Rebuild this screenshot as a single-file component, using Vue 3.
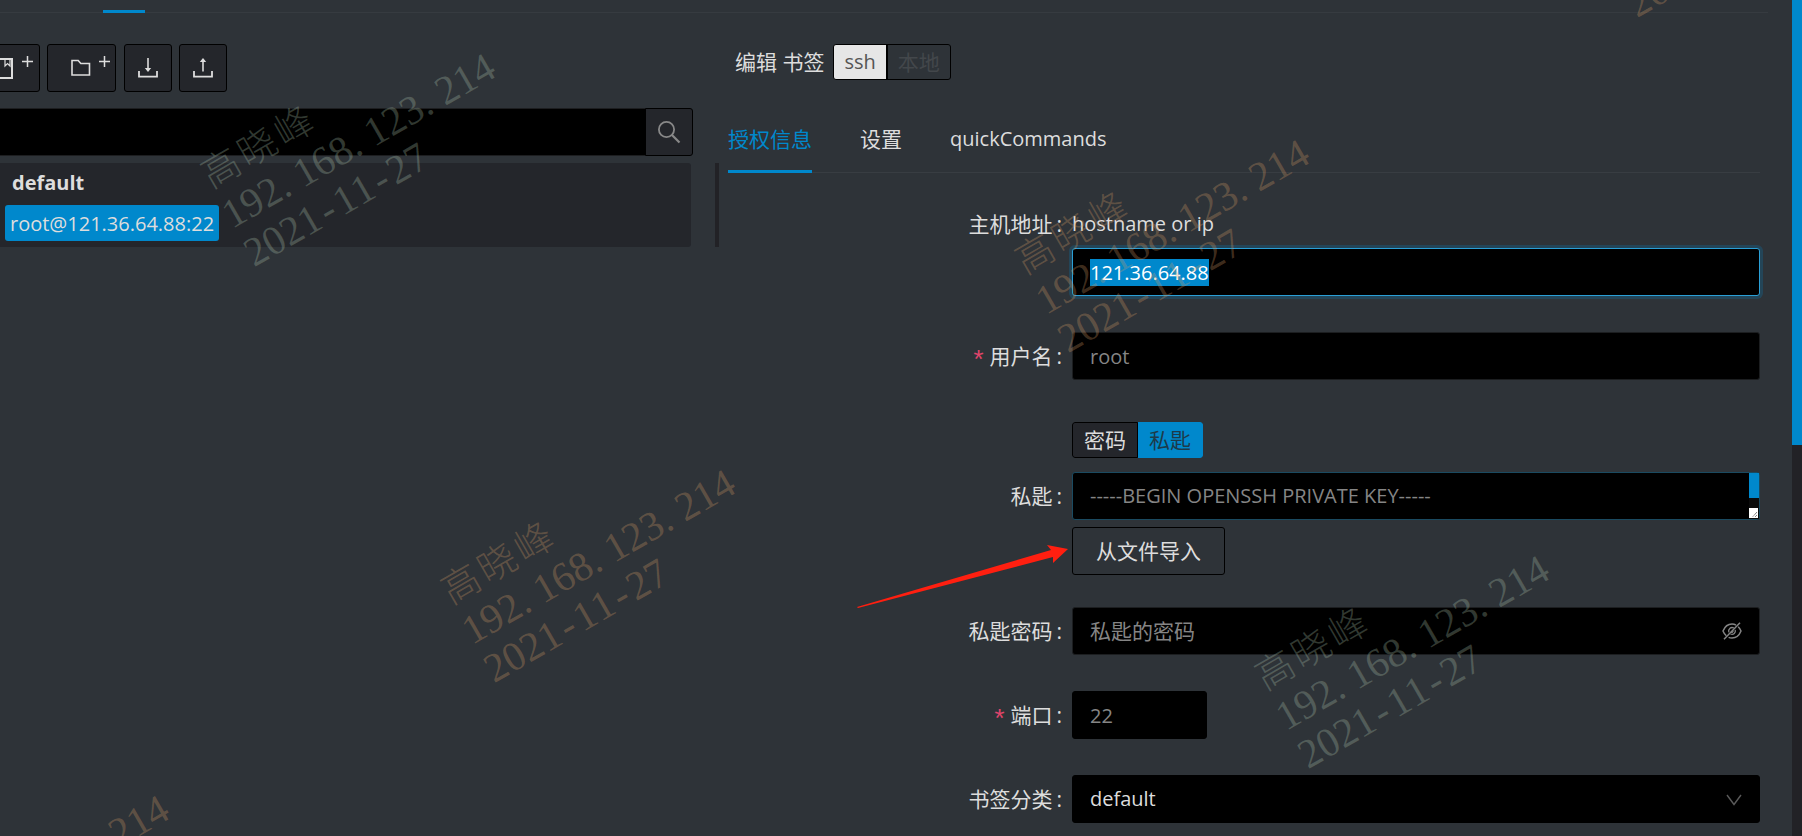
<script setup>
import { onMounted, ref } from 'vue'

const host = ref('121.36.64.88')
const hostInput = ref(null)
const kind = ref('ssh')
const auth = ref('key')
const category = ref('default')
const tabs = ['授权信息', '设置', 'quickCommands']
const activeTab = ref('授权信息')

const owner = '高晓峰'
const markLines = [owner, '192.168.123.214', '2021-11-27']
const marks = [
  { x: 192, y: 160, warm: false, lines: markLines },
  { x: 1006, y: 246, warm: true, lines: markLines },
  { x: 432, y: 576, warm: true, lines: markLines },
  { x: 1246, y: 662, warm: false, lines: markLines },
  { x: 83, y: 827, warm: true, lines: ['.214'] },
  { x: 1619, y: -13, warm: true, lines: ['20'] }
]

onMounted(() => {
  hostInput.value.focus()
  hostInput.value.select()
})
</script>

<template>
  <div class="page">
    <div class="top-line"><span class="top-ink"></span></div>

    <div class="columns">
      <aside class="side">
        <div class="toolbar">
          <div class="tool-group">
            <button class="tool tool-book" type="button" aria-label="新建书签">
              <svg width="23" height="23" viewBox="0 0 23 23" fill="none" stroke="currentColor" stroke-width="2">
                <path d="M3 2H21V21H3Z" />
                <path d="M14 2V9L16.500 6.500L19 9V2" stroke-width="1.2" />
              </svg>
              <svg class="plus" width="11" height="11" viewBox="0 0 11 11" stroke="currentColor" stroke-width="1.5"><path d="M5.5 0V11M0 5.5H11" /></svg>
            </button>
            <button class="tool tool-folder" type="button" aria-label="新建文件夹">
              <svg width="20" height="18" viewBox="0 0 20 18" fill="none" stroke="currentColor" stroke-width="1.6">
                <path d="M1 1.5H7.2L9.8 4.5H18.5V16H1Z" />
              </svg>
              <svg class="plus" width="11" height="11" viewBox="0 0 11 11" stroke="currentColor" stroke-width="1.5"><path d="M5.5 0V11M0 5.5H11" /></svg>
            </button>
          </div>
          <div class="tool-group">
            <button class="tool tool-square" type="button" aria-label="导入">
              <svg width="20" height="20" viewBox="0 0 20 20" fill="none" stroke="currentColor" stroke-width="1.8">
                <path d="M1 13V18.6H19V13" />
                <path d="M10 0V11" stroke-width="1.6" />
                <path d="M6.8 10H13.2L10 14Z" fill="currentColor" stroke="none" />
              </svg>
            </button>
            <button class="tool tool-square" type="button" aria-label="导出">
              <svg width="20" height="20" viewBox="0 0 20 20" fill="none" stroke="currentColor" stroke-width="1.8">
                <path d="M1 13V18.6H19V13" />
                <path d="M10 3V13.5" stroke-width="1.6" />
                <path d="M6.8 4H13.2L10 0Z" fill="currentColor" stroke="none" />
              </svg>
            </button>
          </div>
        </div>

        <div class="search">
          <input class="search-input" type="text" aria-label="搜索" />
          <button class="search-btn" type="button" aria-label="搜索">
            <svg width="24" height="24" viewBox="0 0 24 24" fill="none" stroke="currentColor" stroke-width="1.8">
              <circle cx="9.5" cy="9.5" r="7.6" />
              <path d="M15 15L22.5 22.5" stroke-width="2.2" />
            </svg>
          </button>
        </div>

        <div class="tree-row">
          <div class="tree">
            <div class="group">default</div>
            <a class="item" href="#">root@121.36.64.88:22</a>
          </div>
          <div class="divider"></div>
        </div>
      </aside>

      <main class="main">
        <div class="title">
          <span>编辑 书签</span>
          <div class="seg seg-kind" role="radiogroup" aria-label="类型">
            <label class="latin" :class="{ on: kind === 'ssh' }"><input v-model="kind" type="radio" name="kind" value="ssh" />ssh</label>
            <label :class="{ on: kind === 'local' }"><input v-model="kind" type="radio" name="kind" value="local" />本地</label>
          </div>
        </div>

        <div class="tabs" role="tablist">
          <button
            v-for="t in tabs"
            :key="t"
            type="button"
            role="tab"
            class="tab"
            :class="{ active: t === activeTab, latin: t === 'quickCommands' }"
            :aria-selected="t === activeTab"
            @click="activeTab = t"
          >{{ t }}</button>
        </div>

        <form class="form" @submit.prevent>
          <div class="field">
            <label class="label label-hint" for="host">主机地址</label>
            <div class="control">
              <div class="hint">hostname or ip</div>
              <input id="host" ref="hostInput" v-model="host" class="box host" type="text" />
            </div>
          </div>

          <div class="field">
            <label class="label" for="user"><i class="req">*</i>用户名</label>
            <div class="control"><input id="user" class="box" type="text" placeholder="root" /></div>
          </div>

          <div class="field field-auth">
            <label class="label label-key" for="key">私匙</label>
            <div class="control auth">
              <div class="seg seg-auth" role="radiogroup" aria-label="认证方式">
                <label :class="{ on: auth === 'password' }"><input v-model="auth" type="radio" name="auth" value="password" />密码</label>
                <label :class="{ on: auth === 'key' }"><input v-model="auth" type="radio" name="auth" value="key" />私匙</label>
              </div>
              <div class="key-wrap">
                <textarea id="key" class="box key" rows="1" placeholder="-----BEGIN OPENSSH PRIVATE KEY-----"></textarea>
                <span class="key-bar">
                  <span class="key-thumb"></span>
                  <svg class="grip" width="9" height="10" viewBox="0 0 9 10"><path d="M8 4L3.5 9M8 7L6 9" stroke="#555" fill="none" stroke-dasharray="1 .6" /></svg>
                </span>
              </div>
              <button class="import" type="button">从文件导入</button>
            </div>
          </div>

          <div class="field">
            <label class="label" for="pass">私匙密码</label>
            <div class="control">
              <input id="pass" class="box" type="password" placeholder="私匙的密码" />
              <svg class="eye" width="20" height="18" viewBox="0 0 20 18" fill="none" stroke="currentColor" stroke-width="1.5">
                <path d="M14 3.2C12.8 2.4 11.500 2 10 2C6 2 2.800 4.500 1 9C1.800 11 2.900 12.600 4.300 13.800M6.600 15.300C7.600 15.800 8.800 16 10 16C14 16 17.200 13.500 19 9C18.300 7.200 17.300 5.700 16.200 4.700" />
                <path d="M11.800 6C9 4.400 6 7 6.800 10.300M8.500 12C11.500 13.400 14 10.700 13.200 7.800M9 9.800C9.800 10.800 11.300 10 11 8.600" stroke-width="1.3" />
                <path d="M18 .8L2 17.200" />
              </svg>
            </div>
          </div>

          <div class="field">
            <label class="label" for="port"><i class="req">*</i>端口</label>
            <div class="control"><input id="port" class="box solid port" type="text" placeholder="22" /></div>
          </div>

          <div class="field">
            <label class="label" for="cat">书签分类</label>
            <div class="control">
              <select id="cat" v-model="category" class="box solid"><option>default</option></select>
              <svg class="caret" width="16" height="12" viewBox="0 0 16 12" fill="none" stroke="currentColor" stroke-width="1.4"><path d="M1 1L8 10.500L15 1" /></svg>
            </div>
          </div>
        </form>
      </main>
    </div>

    <div class="scroll"><div class="thumb"></div></div>

    <div
      v-for="(m, i) in marks"
      :key="i"
      class="mark"
      :class="{ warm: m.warm }"
      :style="{ left: m.x + 'px', top: m.y + 'px' }"
    >
      <div v-for="l in m.lines" :key="l" class="mark-line" :class="{ wide: l === owner }"><span v-for="(c, k) in l" :key="k" :class="{ dot: c === '.' }">{{ c }}</span></div>
    </div>

    <svg class="arrow" width="212" height="64" viewBox="0 0 212 64">
      <path d="M0 62L194 5L190 0L211 4L196 18L196 12L1 63Z" fill="#ff1f10" />
    </svg>
  </div>
</template>

<style>
body {
  background: #2e3338;
}
</style>

<style scoped>
.page {
  position: relative;
  min-height: 100vh;
  overflow: hidden;
  box-sizing: border-box;
  padding-right: 10px;
  background: #2e3338;
  color: #ddd;
  font-family: "Open Sans", "Noto Sans CJK SC", sans-serif;
  font-size: 21px;
  line-height: 32px;
}
.page *,
.page *::before {
  box-sizing: border-box;
}
button,
input,
select,
textarea {
  margin: 0;
  font: inherit;
  color: inherit;
  outline: none;
}
svg {
  display: block;
}
.latin {
  font-size: 20px;
}
.top-line {
  display: flex;
  align-items: flex-end;
  height: 13px;
  margin-right: 24px;
  padding-left: 103px;
  border-bottom: 1px solid #363b40;
}
.top-ink {
  width: 42px;
  height: 3px;
  margin-bottom: -1px;
  background: #0088cc;
}
.columns {
  display: flex;
}
.side {
  flex: 0 0 728px;
  padding-top: 31px;
}
.toolbar {
  display: flex;
  gap: 8px;
  margin-bottom: 16px;
}
.tool-group {
  display: flex;
  gap: 7px;
}
.tool {
  display: flex;
  align-items: center;
  height: 48px;
  padding: 0;
  border: 1px solid #000;
  border-radius: 3px;
  background: #24262b;
}
.tool-book {
  width: 60px;
  margin-left: -20px;
  padding-left: 10px;
}
.tool-folder {
  width: 69px;
  padding-left: 23px;
}
.tool-square {
  width: 48px;
  justify-content: center;
}
.plus {
  margin-bottom: 13px;
  margin-left: 8px;
}
.search {
  display: flex;
  width: 693px;
  height: 48px;
}
.search-input {
  flex: 1;
  min-width: 0;
  border: 1px solid #1d1e20;
  border-width: 1px 0;
  background: #000;
}
.search-btn {
  display: flex;
  align-items: center;
  justify-content: center;
  width: 48px;
  padding: 0;
  border: 1px solid #000;
  border-radius: 0 3px 3px 0;
  background: #24262b;
  color: #888;
}
.tree-row {
  display: flex;
  gap: 24px;
  margin-top: 7px;
}
.tree {
  width: 691px;
  height: 84px;
  padding: 4px 5px;
  border-radius: 0 3px 3px 0;
  background: #24262b;
}
.group {
  height: 38px;
  padding-left: 7px;
  font-size: 20px;
  font-weight: 700;
}
.item {
  display: inline-block;
  height: 36px;
  padding: 3px 5px;
  border-radius: 3px;
  background: #0088cc;
  color: #ddd;
  font-size: 20px;
  text-decoration: none;
}
.divider {
  width: 4px;
  background: #222226;
}
.main {
  flex: 1;
  min-width: 0;
  padding: 31px 32px 12px 0;
}
.title {
  display: flex;
  align-items: center;
  gap: 9px;
  padding-left: 7px;
}
.seg {
  display: flex;
  width: max-content;
  height: 36px;
  border-radius: 3px;
  overflow: hidden;
}
.seg label {
  padding: 1px 11px;
  border: 1px solid #000;
}
.seg label:first-child {
  border-radius: 3px 0 0 3px;
}
.seg label:last-child {
  border-left-width: 0;
  border-radius: 0 3px 3px 0;
}
.seg input {
  position: absolute;
  width: 1px;
  height: 1px;
  opacity: 0;
}
.seg-kind label {
  padding: 1px 10px;
  color: #43474b;
}
.seg-kind .on {
  background: #e6e6e6;
  color: #555;
}
.seg-kind label:first-child {
  border-right-width: 2px;
}
.seg-auth label {
  background: #24262b;
}
.seg-auth .on {
  border-color: #0088cc;
  background: #0088cc;
  color: #1d3a4a;
}
.tabs {
  display: flex;
  gap: 48px;
  height: 67px;
  margin-top: 26px;
  border-bottom: 1px solid #383d42;
}
.tab {
  height: 67px;
  padding: 2px 0 0;
  border: 0;
  border-bottom: 3px solid transparent;
  background: none;
}
.tab.active {
  border-bottom-color: #0088cc;
  color: #0088cc;
}
.form {
  padding-top: 35px;
}
.field {
  display: grid;
  grid-template-columns: minmax(0, 1fr) minmax(0, 2fr);
  margin-bottom: 36px;
}
.field-auth {
  margin-bottom: 32px;
}
.field:last-child {
  margin-bottom: 0;
}
.label {
  padding: 8px 10px 8px 0;
  text-align: right;
}
.label::after {
  content: ":";
  margin-left: 4px;
}
.label-hint {
  padding-top: 0;
}
.label-key {
  padding-top: 64px;
}
.req {
  margin-right: 3px;
  color: #e0456b;
  font-style: normal;
  font-family: "Liberation Mono", monospace;
  font-size: 26px;
  line-height: 0;
  vertical-align: -5px;
}
.control {
  position: relative;
}
.hint {
  height: 40px;
  font-size: 20px;
}
.box {
  display: block;
  width: 100%;
  height: 48px;
  padding: 0 17px;
  border: 1px solid #1c1e20;
  border-radius: 3px;
  background: #000;
  font-size: 20px;
}
.box::placeholder {
  color: #858585;
  opacity: 1;
}
#pass::placeholder {
  font-size: 21px;
}
.box::selection {
  background: #0088cc;
  color: #fff;
}
.host {
  border-color: #2a9fd6;
  box-shadow: 0 0 0 3px rgba(0, 136, 204, 0.22);
}
.solid {
  border-color: #000;
  appearance: none;
}
.port {
  width: 135px;
}
.auth {
  padding-top: 6px;
}
.key-wrap {
  position: relative;
  margin: 14px 0 7px;
}
.key {
  padding: 7px 17px;
  border-color: #1a4a60;
  overflow: hidden;
  resize: none;
}
.key-bar {
  position: absolute;
  top: 1px;
  right: 1px;
  bottom: 1px;
  width: 10px;
  background: #0b0b0b;
}
.key-thumb {
  display: block;
  height: 25px;
  background: #0088cc;
}
.grip {
  position: absolute;
  bottom: 1px;
  left: 0;
  background: #fff;
}
.import {
  display: block;
  height: 48px;
  padding: 0 23px;
  border: 1px solid #000;
  border-radius: 3px;
  background: none;
}
.eye,
.caret {
  position: absolute;
  right: 18px;
  color: #858585;
}
.eye {
  top: 15px;
}
.caret {
  top: 19px;
  color: #5a5a5a;
  pointer-events: none;
}
.scroll {
  position: absolute;
  top: 0;
  right: 0;
  bottom: 0;
  width: 10px;
  background: #222226;
}
.thumb {
  height: 445px;
  background: #0088cc;
}
.mark {
  position: absolute;
  transform: rotate(-30deg);
  transform-origin: 0 0;
  color: rgba(175, 200, 175, 0.28);
  font-family: "Liberation Serif", "Noto Sans CJK SC", serif;
  font-size: 41px;
  line-height: 44px;
  pointer-events: none;
  white-space: nowrap;
}
.mark.warm {
  color: rgba(215, 155, 100, 0.3);
}
.mark-line {
  height: 44px;
}
.mark-line span {
  display: inline-block;
  width: 0.5em;
  text-align: center;
}
.mark-line .dot {
  text-align: left;
}
.mark-line.wide {
  font-size: 38px;
  font-weight: 300;
}
.mark-line.wide span {
  width: 42px;
}
.arrow {
  position: absolute;
  left: 857px;
  top: 545px;
  pointer-events: none;
}
</style>
